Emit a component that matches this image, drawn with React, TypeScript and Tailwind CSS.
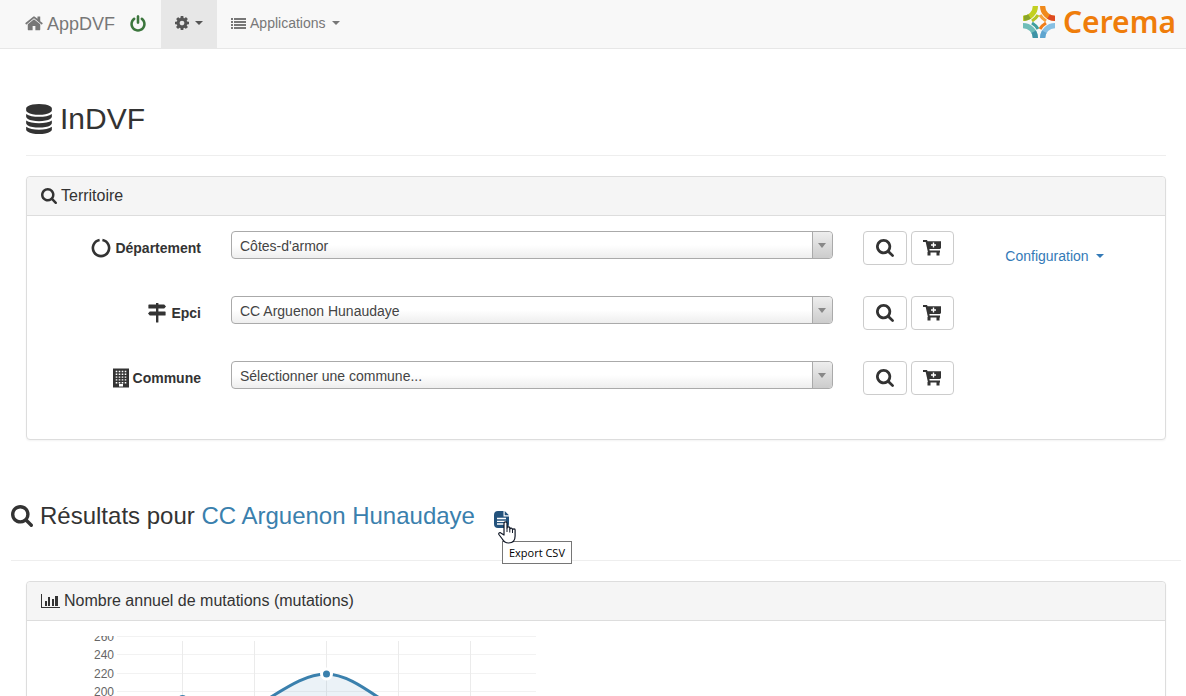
import type { ReactNode } from "react";

type IconProps = { className?: string };

const territories = [
    { id: "departement", label: "Département", value: "Côtes-d'armor", icon: <RingIcon className="w-5 h-5" /> },
    { id: "epci", label: "Epci", value: "CC Arguenon Hunaudaye", icon: <SignsIcon className="w-5 h-5" /> },
    { id: "commune", label: "Commune", value: "Sélectionner une commune...", icon: <BuildingIcon className="w-4 h-5" /> },
];

function HomeIcon({ className }: IconProps) {
    return (
        <svg className={className} viewBox="64 128 1664 1664" fill="currentColor">
            <path d="M1472 992v480q0 26-19 45t-45 19h-384v-384h-256v384h-384q-26 0-45-19t-19-45v-480q0-1 .5-3t.5-3l575-474 575 474q1 2 1 6zm223-69l-62 74q-8 9-21 11h-3q-13 0-21-7l-692-577-692 577q-12 8-24 7-13-2-21-11l-62-74q-8-10-7-23.5t11-21.5l719-599q32-26 76-26t76 26l244 204v-195q0-14 9-23t23-9h192q14 0 23 9t9 23v408l219 182q10 8 11 21.5t-7 23.5z" />
        </svg>
    );
}

function PowerIcon({ className }: IconProps) {
    return (
        <svg className={className} viewBox="0 0 1792 1792" fill="currentColor">
            <path d="M1664 896q0 156-61 298t-164 245-245 164-298 61-298-61-245-164-164-245-61-298q0-182 80.5-343t226.5-270q43-32 95.5-25t83.5 50q32 42 24.5 94.5t-49.5 84.5q-98 74-151.5 181t-53.5 228q0 104 40.5 198.5t109.5 163.5 163.5 109.5 198.5 40.5 198.5-40.5 163.5-109.5 109.5-163.5 40.5-198.5q0-121-53.5-228t-151.5-181q-42-32-49.5-84.5t24.5-94.5q31-43 84-50t95 25q146 109 226.5 270t80.5 343zm-640-768v640q0 52-38 90t-90 38-90-38-38-90v-640q0-52 38-90t90-38 90 38 38 90z" />
        </svg>
    );
}

function CogIcon({ className }: IconProps) {
    return (
        <svg className={className} viewBox="128 128 1536 1536" fill="currentColor">
            <path d="M1152 896q0-106-75-181t-181-75-181 75-75 181 75 181 181 75 181-75 75-181zm512-109v222q0 12-8 23t-20 13l-185 28q-19 54-39 91 35 50 107 138 10 12 10 25t-9 23q-27 37-99 108t-94 71q-12 0-26-9l-138-108q-44 23-91 38-16 136-29 186-7 28-36 28h-222q-14 0-24.5-8.5t-11.5-21.5l-28-184q-49-16-90-37l-141 107q-10 9-25 9-14 0-25-11-126-114-165-168-7-10-7-23 0-12 8-23 15-21 51-66.5t54-70.5q-27-50-41-99l-183-27q-13-2-21-12.5t-8-23.5v-222q0-12 8-23t19-13l186-28q14-46 39-92-40-57-107-138-10-12-10-24 0-10 9-23 26-36 98.5-107.5t94.5-71.5q13 0 26 10l138 107q44-23 91-38 16-136 29-186 7-28 36-28h222q14 0 24.5 8.5t11.5 21.5l28 184q49 16 90 37l142-107q9-9 24-9 13 0 25 10 129 119 165 170 7 8 7 22 0 12-8 23-15 21-51 66.5t-54 70.5q26 50 41 98l183 28q13 2 21 12.5t8 23.5z" />
        </svg>
    );
}

function ListIcon({ className }: IconProps) {
    return (
        <svg className={className} viewBox="0 0 15 11" fill="currentColor">
            <path d="M0 0h2v2H0zM3 0h12v2H3zM0 3h2v2H0zM3 3h12v2H3zM0 6h2v2H0zM3 6h12v2H3zM0 9h2v2H0zM3 9h12v2H3z" />
        </svg>
    );
}

function SearchIcon({ className }: IconProps) {
    return (
        <svg className={className} viewBox="64 128 1664 1664" fill="currentColor">
            <path d="M1216 832q0-185-131.5-316.5t-316.5-131.5-316.5 131.5-131.5 316.5 131.5 316.5 316.5 131.5 316.5-131.5 131.5-316.5zm512 832q0 52-38 90t-90 38q-54 0-90-38l-343-342q-179 124-399 124-143 0-273.5-55.5t-225-150-150-225-55.5-273.5 55.5-273.5 150-225 225-150 273.5-55.5 273.5 55.5 225 150 150 225 55.5 273.5q0 220-124 399l343 343q37 37 37 90z" />
        </svg>
    );
}

function DatabaseIcon({ className }: IconProps) {
    return (
        <svg className={className} viewBox="128 0 1536 1792" fill="currentColor">
            <path d="M896 768q237 0 443-43t325-127v170q0 69-103 128t-280 93.5-385 34.5-385-34.5-280-93.5-103-128v-170q119 84 325 127t443 43zm0 768q237 0 443-43t325-127v170q0 69-103 128t-280 93.5-385 34.5-385-34.5-280-93.5-103-128v-170q119 84 325 127t443 43zm0-384q237 0 443-43t325-127v170q0 69-103 128t-280 93.5-385 34.5-385-34.5-280-93.5-103-128v-170q119 84 325 127t443 43zm0-1152q208 0 385 34.5t280 93.5 103 128v128q0 69-103 128t-280 93.5-385 34.5-385-34.5-280-93.5-103-128v-128q0-69 103-128t280-93.5 385-34.5z" />
        </svg>
    );
}

function ChartIcon({ className }: IconProps) {
    return (
        <svg className={className} viewBox="0 0 19 14" fill="currentColor">
            <path d="M0 0h1v13h18v1H0zM4 7h2v5H4zM7 3h2v9H7zM11 5h2v7h-2zM14 2h3v10h-3z" />
        </svg>
    );
}

function RingIcon({ className }: IconProps) {
    return (
        <svg className={className} viewBox="0 0 20 20" fill="none" stroke="currentColor" strokeWidth="2.6">
            <path d="M11.4 2A8.100 8.100 0 1 1 8.600 2" />
        </svg>
    );
}

function SignsIcon({ className }: IconProps) {
    return (
        <svg className={className} viewBox="0 0 20 20" fill="currentColor">
            <path d="M9 0h2.400v1.500H9zM2 1.500h15.200L19 3.500l-1.800 2H2q-.6 0-.6-.6V2.100q0-.6.600-.6zM9 5.500h2.400v3H9zM18 8.500H2.800L1 10.500l1.800 2H18q.6 0 .6-.6V9.100q0-.6-.6-.6zM9 12.500h2.400V19q0 .5-.5.5H9.500Q9 19.500 9 19z" />
        </svg>
    );
}

function BuildingIcon({ className }: IconProps) {
    return (
        <svg className={className} viewBox="0 0 16 20">
            <path fill="currentColor" d="M0 .5h16v19H0z" />
            <path
                stroke="#fff"
                strokeWidth="1.4"
                strokeDasharray="1.6 1.4"
                d="M2.700 3.500h11M2.700 6.300h11M2.700 9.100h11M2.700 11.900h11M2.700 14.700h11"
            />
            <path fill="#fff" d="M6 16h4v2.500H6z" />
        </svg>
    );
}

function CartIcon({ className }: IconProps) {
    return (
        <svg className={className} viewBox="0 0 18 16">
            <path fill="currentColor" d="M0 0h4l.6 1.300H18V8l-1 1H6.400l.2 1.500H17v2H5L2.700 2H0z" />
            <path fill="currentColor" d="M4.500 12h3v3.500h-3zM13.500 12h3v3.500h-3z" />
            <path stroke="#fff" strokeWidth="1.400" d="M10.500 2.500v5M8 5h5" />
        </svg>
    );
}

function FileIcon({ className }: IconProps) {
    return (
        <svg className={className} viewBox="0 0 15 17">
            <path fill="currentColor" d="M4 0h5.500v5.500H15V13q0 4-4 4H4q-4 0-4-4V4q0-4 4-4zM10.700 0L15 4.300h-4.300z" />
            <path stroke="#fff" strokeWidth="1.300" d="M3 7.500h9M3 10.300h9M3 13h9" />
        </svg>
    );
}

function HandCursor({ className }: IconProps) {
    return (
        <svg className={className} viewBox="0 0 18 23">
            <path
                fill="#fff"
                stroke="#111827"
                strokeWidth="1.200"
                strokeLinejoin="round"
                d="M6 14V2.300a1.500 1.500 0 0 1 3 0V7a1.400 1.400 0 0 1 2.800.4V8a1.400 1.400 0 0 1 2.700.500V9a1.300 1.300 0 0 1 2.600.500V15c0 4-2 7-6.500 7-3.500 0-5-1.500-6.300-4L.9 13.500c-.7-1.500 1.200-2.500 2.300-1.300z"
            />
            <path stroke="#111827" strokeWidth="1" d="M9 7v4M11.800 8v3.500M14.500 9v3" />
        </svg>
    );
}

function CeremaLogo() {
    return (
        <a href="#" aria-label="Cerema" className="flex items-center gap-2 pb-1 text-[#ef7d0b]">
            <svg className="w-8 h-8" viewBox="0 0 32 32" fill="none">
                {/* four branches */}
                <g strokeWidth="5.2">
                    <path stroke="#c3d021" d="M0 12.400A12.400 12.400 0 0 0 12.400 0" />
                    <path stroke="#f08a1c" d="M19.600 0A12.400 12.400 0 0 0 32 12.400" />
                    <path stroke="#6fbdb9" d="M0 19.600A12.400 12.400 0 0 1 12.400 32" />
                    <path stroke="#86bfe3" d="M32 19.600A12.400 12.400 0 0 0 19.600 32" />
                </g>
                {/* inner ribbons */}
                <g strokeWidth="3.200">
                    <path stroke="#b4c424" d="M9 15A17.500 17.500 0 0 0 15 9" />
                    <path stroke="#f6a13a" d="M17 9A17.500 17.500 0 0 0 23 15" />
                    <path stroke="#3f9f9f" d="M9 17A17.500 17.500 0 0 1 15 23" />
                    <path stroke="#f07d1a" d="M23 17A17.500 17.500 0 0 0 17 23" />
                </g>
                {/* darker overlaps */}
                <g strokeWidth="5.200">
                    <path stroke="#8aa52a" d="M1 12.350A12.400 12.400 0 0 0 6.500 10.500" />
                    <path stroke="#dd4a22" d="M25.500 10.600A12.400 12.400 0 0 0 32 12.400" />
                    <path stroke="#3e93a6" d="M10.700 25.700A12.400 12.400 0 0 1 12.400 32" />
                    <path stroke="#5fa5cf" d="M21.300 25.700A12.400 12.400 0 0 0 19.600 32" />
                </g>
            </svg>
            <span className="font-['Noto_Sans',sans-serif] text-3xl font-semibold">Cerema</span>
        </a>
    );
}

function Caret() {
    return <span className="inline-block border-x-4 border-t-4 border-x-transparent border-t-current" />;
}

function Panel({ icon, title, children }: { icon: ReactNode; title: string; children: ReactNode }) {
    return (
        <section className="mx-[15px] rounded border border-[#ddd] bg-white shadow-xs">
            <h3 className="flex items-center gap-1 rounded-t border-b border-[#ddd] bg-[#f5f5f5] px-3.5 h-[39px] text-base">
                {icon}
                {title}
            </h3>
            <div className="py-[15px]">{children}</div>
        </section>
    );
}

function MutationsChart() {
    const rows = [
        { label: "260", y: 0 },
        { label: "240", y: 18 },
        { label: "220", y: 37 },
        { label: "200", y: 55 },
    ];
    const columns = [140, 212, 284, 356, 428];

    return (
        <svg className="ml-[15px] block" width="510" height="240" role="img" aria-label="Nombre annuel de mutations">
            {rows.map((row) => (
                <g key={row.label}>
                    <path stroke="#f2f2f2" d={`M75 ${row.y + 0.5}h419`} />
                    <text x="72" y={row.y + 5} textAnchor="end" fontSize="12" fill="#666">
                        {row.label}
                    </text>
                </g>
            ))}
            {columns.map((x) => (
                <path key={x} stroke="#ebebeb" d={`M${x + 0.5} 5v235`} />
            ))}
            <path
                fill="#3a80ad"
                fillOpacity=".1"
                d="M140 64C164 64 188 84 212 71C236 58 260 38 284 38S332 60 356 74L428 120V240H140z"
            />
            <path
                fill="none"
                stroke="#3a80ad"
                strokeWidth="3"
                d="M140 64C164 64 188 84 212 71C236 58 260 38 284 38S332 60 356 74L428 120"
            />
            <circle cx="140.500" cy="63" r="4" fill="#3a80ad" />
            <circle cx="284.500" cy="38" r="5" fill="#3a80ad" stroke="#fff" strokeWidth="3" />
        </svg>
    );
}

export default function App() {
    return (
        <div className="h-screen overflow-hidden bg-white font-['Liberation_Sans',Arial,sans-serif] text-sm text-[#333]">
            <nav className="flex h-[49px] items-center border-b border-[#e7e7e7] bg-[#f8f8f8] pl-[25px] pr-2.5 text-[#777]">
                <a href="#" className="flex items-center gap-1 text-lg">
                    <HomeIcon className="w-[18px] h-[18px]" />
                    AppDVF
                </a>
                <a href="#" aria-label="Déconnexion" className="px-3.5 text-[#3c763d]">
                    <PowerIcon className="w-[18px] h-[18px]" />
                </a>
                <button aria-label="Paramètres" className="flex h-full items-center gap-1.5 bg-[#e7e7e7] px-3.5 pb-0.5 text-[#555]">
                    <CogIcon className="w-3.5 h-3.5" />
                    <Caret />
                </button>
                <button className="mr-auto flex h-full items-center gap-1 px-3.5 pb-0.5">
                    <ListIcon className="w-[15px] h-[11px]" />
                    <span className="mr-0.5">Applications</span>
                    <Caret />
                </button>
                <CeremaLogo />
            </nav>

            <main className="pl-[11px] pr-[5px]">
                <header className="mx-[15px] mt-[50px] mb-5 flex h-[57px] border-b border-[#eee]">
                    <h1 className="flex h-10 items-center gap-2 text-3xl">
                        <DatabaseIcon className="w-[26px] h-[30px]" />
                        InDVF
                    </h1>
                </header>

                <Panel icon={<SearchIcon className="w-4 h-4" />} title="Territoire">
                    <div className="grid grid-cols-[10fr_2fr]">
                        <form className="flex flex-col gap-[31px] pb-[29px]">
                            {territories.map((item) => (
                                <div key={item.id} className="grid h-[34px] grid-cols-[189px_10fr_2fr] items-start">
                                    <label htmlFor={item.id} className="flex h-[34px] items-center justify-end gap-1 pr-[15px] font-bold">
                                        {item.icon}
                                        {item.label}
                                    </label>
                                    <div className="relative ml-[15px] mr-4">
                                        <select
                                            id={item.id}
                                            className="block h-7 w-full appearance-none rounded border border-[#aaa] bg-linear-to-b from-white from-50% to-[#eee] px-2 pt-0.5 text-[#444]"
                                        >
                                            <option>{item.value}</option>
                                        </select>
                                        <span className="pointer-events-none absolute inset-y-px right-px flex w-5 items-center justify-center rounded-r border-l border-[#aaa] bg-linear-to-b from-[#eee] to-[#ccc] text-[#888]">
                                            <span className="border-x-4 border-t-5 border-x-transparent border-t-current" />
                                        </span>
                                    </div>
                                    <div className="flex gap-1 pl-3.5">
                                        <button
                                            type="button"
                                            aria-label="Rechercher"
                                            className="flex h-[34px] w-11 shrink-0 items-center justify-center rounded border border-[#ccc] bg-white"
                                        >
                                            <SearchIcon className="w-[18px] h-[18px]" />
                                        </button>
                                        <button
                                            type="button"
                                            aria-label="Ajouter au panier"
                                            className="flex h-[34px] w-[43px] shrink-0 items-center justify-center rounded border border-[#ccc] bg-white"
                                        >
                                            <CartIcon className="w-[18px] h-4" />
                                        </button>
                                    </div>
                                </div>
                            ))}
                        </form>
                        <div className="px-[30px] pt-[15px]">
                            <button className="flex items-center gap-[7px] text-[#337ab7]">
                                Configuration
                                <Caret />
                            </button>
                        </div>
                    </div>
                </Panel>

                <header className="mt-[57px] mb-5 flex h-16 border-b border-[#eee]">
                    <h2 className="flex h-[38px] items-center gap-[7px] text-2xl">
                        <SearchIcon className="w-[22px] h-[22px]" />
                        <span>
                            Résultats pour <span className="text-[#3a80ad]">CC Arguenon Hunaudaye</span>
                        </span>
                    </h2>
                    <div className="relative ml-[19px] pt-3.5">
                        <button aria-label="Export CSV" className="block text-[#23527c]">
                            <FileIcon className="w-[15px] h-[17px]" />
                        </button>
                        <HandCursor className="absolute left-1 top-6 z-10 w-[18px] h-[23px]" />
                        <div
                            role="tooltip"
                            className="absolute left-2 top-11 whitespace-nowrap border border-[#767676] bg-white px-1.5 font-['Open_Sans',sans-serif] text-[11px] leading-[21px] text-black"
                        >
                            Export CSV
                        </div>
                    </div>
                </header>

                <Panel icon={<ChartIcon className="w-[19px] h-3.5" />} title="Nombre annuel de mutations (mutations)">
                    <MutationsChart />
                </Panel>
            </main>
        </div>
    );
}
